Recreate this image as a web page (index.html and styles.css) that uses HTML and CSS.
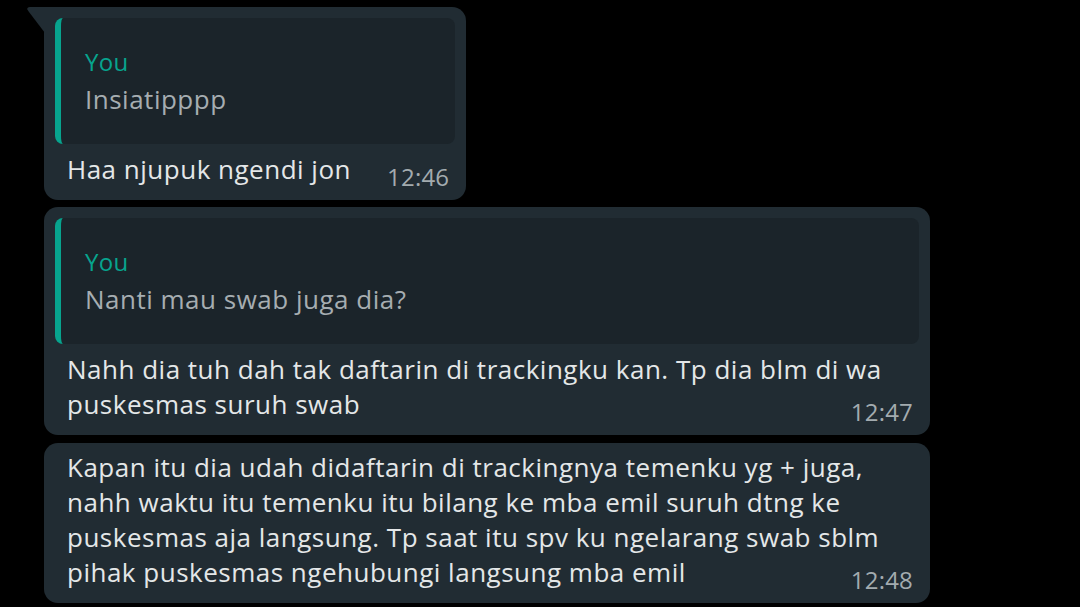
FILE: index.html
```html
<!DOCTYPE html>
<html lang="id">
<head>
    <meta charset="UTF-8">
    <meta name="viewport" content="width=device-width, initial-scale=1.0">
    <title>Chat</title>
    <link rel="stylesheet" href="styles.css">
</head>
<body>

<div class="chat">
    <div class="bubble first">
        <div class="quote">
            <div class="quote-name">You</div>
            <div class="quote-text">Insiatipppp</div>
        </div>
        <div class="msg">Haa njupuk ngendi jon<span class="time">12:46</span></div>
    </div>

    <div class="bubble wide">
        <div class="quote">
            <div class="quote-name">You</div>
            <div class="quote-text">Nanti mau swab juga dia?</div>
        </div>
        <div class="msg">Nahh dia tuh dah tak daftarin di trackingku kan. Tp dia blm di wa puskesmas suruh swab<span class="time">12:47</span></div>
    </div>

    <div class="bubble wide plain">
        <div class="msg">Kapan itu dia udah didaftarin di trackingnya temenku yg + juga, nahh waktu itu temenku itu bilang ke mba emil suruh dtng ke puskesmas aja langsung. Tp saat itu spv ku ngelarang swab sblm pihak puskesmas ngehubungi langsung mba emil<span class="time">12:48</span></div>
    </div>
</div>

</body>
</html>
```

FILE: styles.css
```css
body {
    margin: 0;
    padding: 0;
    background-color: #000;
    font-family: "Open Sans", "Noto Sans", sans-serif;
    color: #e4e7e8;
    height: 607px;
    overflow: hidden;
}

.chat {
    display: flex;
    flex-direction: column;
    align-items: flex-start;
    gap: 7px;
    padding: 7px 0 0 44px;
}

.bubble {
    position: relative;
    background-color: #212c33;
    border-radius: 14px;
    padding: 0 11px;
    box-sizing: border-box;
}

.bubble.first {
    width: fit-content;
    border-top-left-radius: 0;
}

/* little tail of the first message */
.bubble.first::before {
    content: "";
    position: absolute;
    left: -17px;
    top: 0;
    width: 18px;
    height: 26px;
    background-color: #212c33;
    clip-path: polygon(0 0, 100% 0, 100% 100%, 2px 5px, 0 2px);
    border-top-left-radius: 3px;
}

.bubble.wide {
    width: 886px;
}

.bubble.plain {
    margin-top: 1px;
}

.quote {
    margin-top: 11px;
    background-color: #1b242a;
    border-left: 6px solid #07a48e;
    border-radius: 8px;
    padding: 26px 20px 26px 24px;
}

.quote-name {
    color: #07a48e;
    font-size: 24px;
    line-height: 36px;
    letter-spacing: 0.3px;
}

.quote-text {
    color: #a6adb1;
    font-size: 26px;
    line-height: 38px;
    letter-spacing: 0.5px;
}

.msg {
    display: flow-root;
    font-size: 26px;
    line-height: 35px;
    letter-spacing: 0.5px;
    padding: 8px 6px 13px 12px;
}

.plain .msg {
    padding-top: 7px;
}

.time {
    float: right;
    margin: 7px 0 -7px 36px;
    font-size: 24px;
    line-height: 35px;
    letter-spacing: 0.2px;
    color: #a3abaf;
}
```
